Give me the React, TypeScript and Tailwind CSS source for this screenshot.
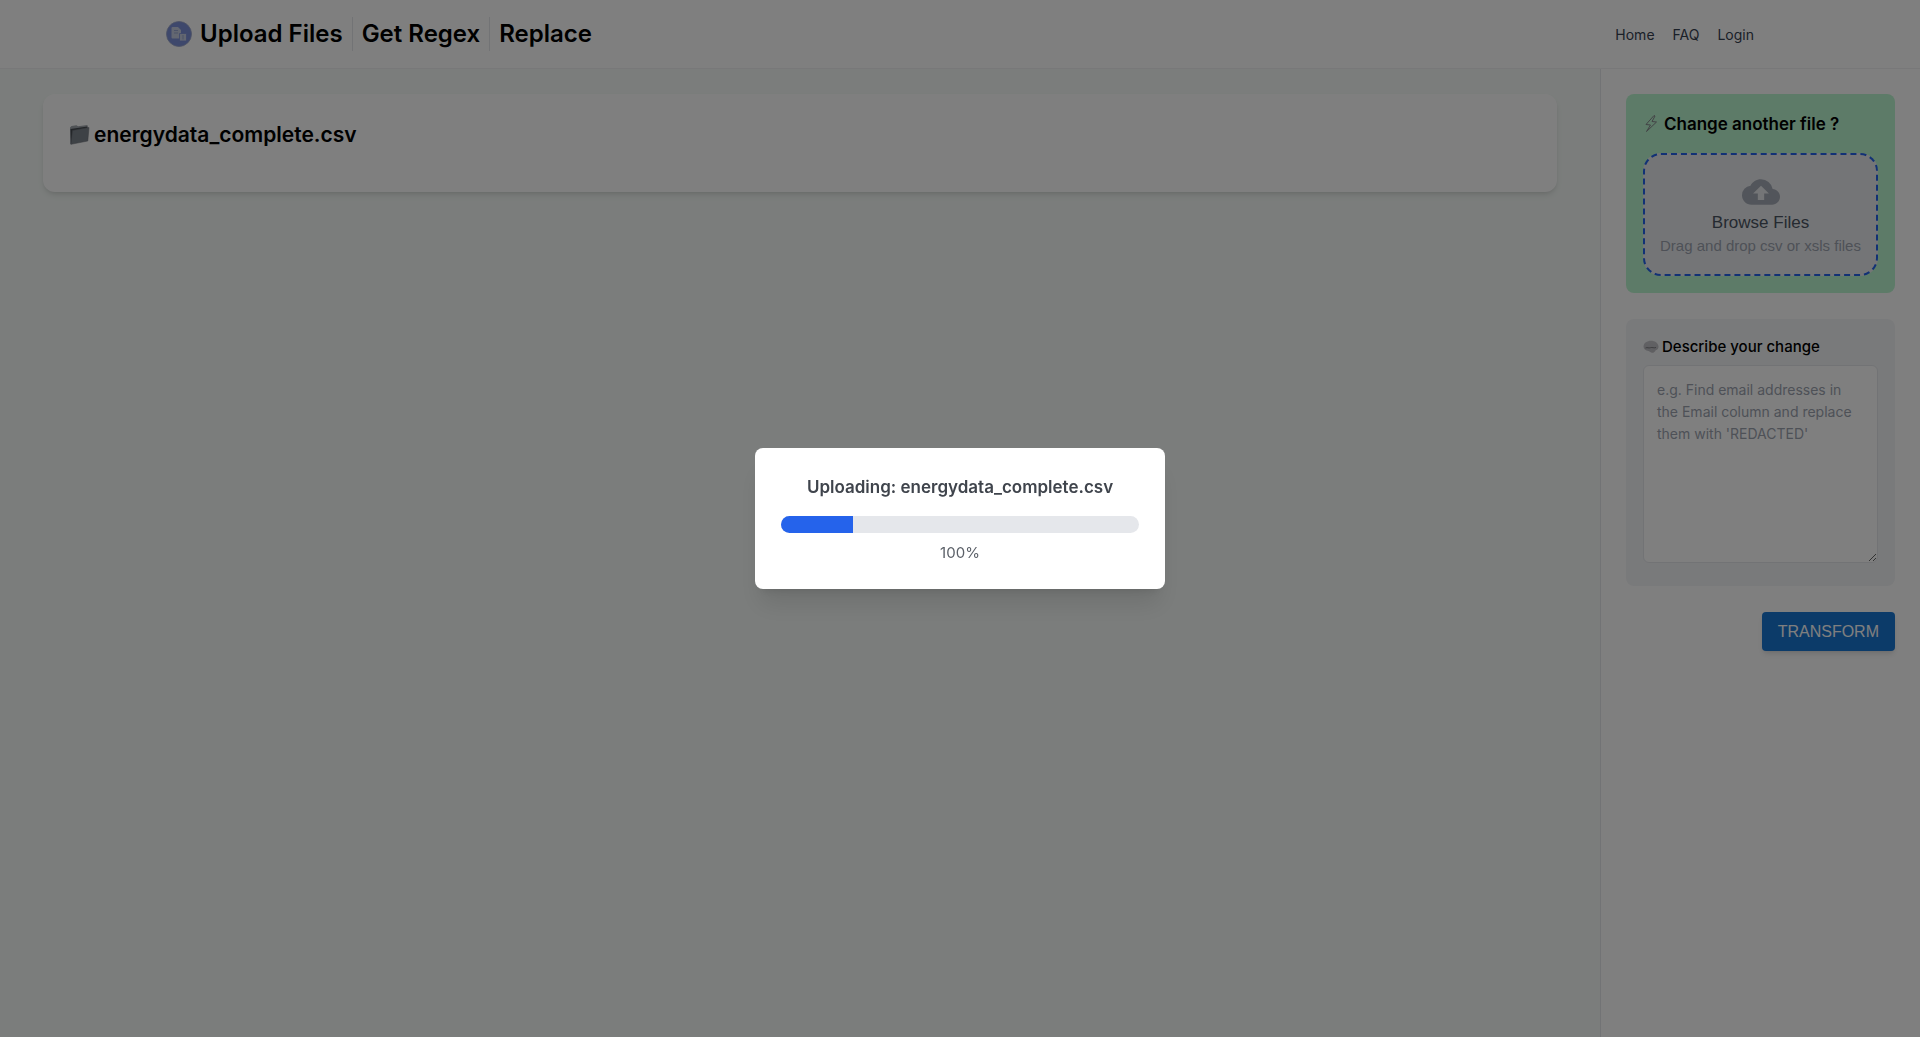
import { MdCloudUpload } from "react-icons/md";

const navigation = [
  { name: "Home", href: "#home" },
  { name: "FAQ", href: "#faq" },
  { name: "Login", href: "#login" },
];

const steps = ["Upload Files", "Get Regex", "Replace"];

const Logo = () => (
  <svg width="26" height="26" viewBox="0 0 26 26" fill="none" aria-hidden="true">
    <defs>
      <linearGradient id="logo" x1="13" y1="0" x2="13" y2="26">
        <stop offset="0.65" stopColor="#7c90d8" />
        <stop offset="0.8" stopColor="#4a78d0" />
        <stop offset="1" stopColor="#4a74b8" />
      </linearGradient>
    </defs>
    <circle cx="13" cy="13" r="12.5" fill="url(#logo)" stroke="#9aa5c8" strokeWidth="0.8" />
    <path d="M6.500 6h5.500l3 3v8.500H6.500a1 1 0 0 1-1-1V7a1 1 0 0 1 1-1z" fill="#c6cee2" />
    <path d="M8 9.500h4M8 12h4" stroke="#98a6d0" />
    <path d="M13.500 12.500h7v7.500h-7z" fill="#c6cee2" stroke="#7c90d8" strokeWidth="0.8" />
    <path d="M17 14v4.500" stroke="#98a6d0" />
  </svg>
);

const FolderIcon = () => (
  <svg width="21" height="22" viewBox="0 0 21 22" fill="none" aria-hidden="true">
    <defs>
      <linearGradient id="folder" x1="3" y1="5" x2="20" y2="19">
        <stop stopColor="#7d848c" />
        <stop offset="0.6" stopColor="#9aa2aa" />
        <stop offset="1" stopColor="#7d848c" />
      </linearGradient>
    </defs>
    <path d="M1 3.500l1.500-1.500 5-.8 1.500 1L18.500 1v3L2 20.500l-1-.5z" fill="#a0a6ad" />
    <path d="M1.500 5L18.500 2.500V5L3 19l-1 .5z" fill="#454a50" />
    <path d="M3.500 6.500L20 3.500 18.800 17 2 20.300z" fill="url(#folder)" stroke="#6a7178" strokeWidth="0.5" />
  </svg>
);

const BoltIcon = () => (
  <svg width="16" height="20" viewBox="0 0 16 20" fill="none" aria-hidden="true">
    <path
      d="M11 1.500L3 10.500l4.500.5L3.500 17.500l10-9.500-4.500-.5 3-5.500z"
      stroke="#85868c"
      strokeLinejoin="round"
    />
  </svg>
);

const BrainIcon = () => (
  <svg width="16" height="14" viewBox="0 0 16 14" fill="none" aria-hidden="true">
    <defs>
      <linearGradient id="brain" x1="8" y1="0" x2="8" y2="14">
        <stop stopColor="#c4c4c9" />
        <stop offset="0.45" stopColor="#98989e" />
        <stop offset="1" stopColor="#3f3f45" />
      </linearGradient>
    </defs>
    <path
      d="M.5 6.500C.8 3 4 .8 8 .8s7 2.200 7.500 5.400c.2 2.300-1 3.500-2.800 4-.6 1.500-2 2.700-3.700 2.600-1.400-.2-2-1.300-3.500-1.700C2.500 10.300.5 9 .5 6.500z"
      fill="url(#brain)"
    />
    <path d="M2.500 8c2-1 3 .5 5-.3s3 .8 5.500-.2" stroke="#5c5c62" strokeWidth="0.7" />
  </svg>
);

const Header = () => (
  <header className="border-b border-[#f0f1f2] bg-white">
    <div className="mx-auto flex h-[68px] max-w-[1638px] items-center justify-between px-[25px]">
      <div className="flex items-center gap-2">
        <Logo />
        <h1 className="flex items-center divide-x divide-gray-200 text-[24px] leading-[34px] font-semibold text-black">
          {steps.map((step) => (
            <span key={step} className="px-[9px] first:pl-0">
              {step}
            </span>
          ))}
        </h1>
      </div>
      <nav className="flex gap-[18px] text-[14px] leading-[21px] text-[#374151]">
        {navigation.map((item) => (
          <a key={item.name} href={item.href}>
            {item.name}
          </a>
        ))}
      </nav>
    </div>
  </header>
);

const Sidebar = () => (
  <aside className="flex w-[320px] shrink-0 flex-col gap-[26px] border-l border-gray-200 bg-white p-[25px]">
    <section className="rounded-lg bg-[#bbf7d0] p-[17px]">
      <h2 className="flex items-center gap-[5px] text-[17px] leading-[26px] font-semibold text-black">
        <BoltIcon />
        Change another file ?
      </h2>
      <label className="mt-4 flex h-[123px] cursor-pointer flex-col items-center justify-center rounded-[18px] border-2 border-dashed border-[#2563eb] bg-[#e9ebee] font-['Liberation_Sans',Arial,sans-serif]">
        <MdCloudUpload className="size-[38px] text-[#a5abb6]" />
        <span className="text-[17px] leading-[24px] text-[#4b5563]">Browse Files</span>
        <span className="text-[15px] leading-[22px] text-[#9ca3af]">Drag and drop csv or xsls files</span>
        <input type="file" className="sr-only" />
      </label>
    </section>
    <section className="rounded-lg bg-[#f3f4f6] px-[17px] pt-[17px] pb-[23px]">
      <label
        htmlFor="change"
        className="flex items-center gap-[3px] text-[15px] leading-[21px] font-medium text-black"
      >
        <BrainIcon />
        Describe your change
      </label>
      <textarea
        id="change"
        className="mt-2 block h-[198px] w-full resize rounded-md border border-gray-200 bg-white p-[13px] text-[14px] leading-[22px] placeholder:text-[#9ca3af]"
        placeholder="e.g. Find email addresses in the Email column and replace them with 'REDACTED'"
      />
    </section>
    <button
      type="button"
      className="h-[39px] self-end rounded bg-[#1976d2] px-4 font-['Liberation_Sans',Arial,sans-serif] text-[16px] leading-[24px] text-white shadow-md"
    >
      TRANSFORM
    </button>
  </aside>
);

const UploadDialog = ({ fileName, fill }: { fileName: string; fill: number }) => (
  <div className="fixed inset-0 z-50 flex items-center justify-center bg-black/50">
    <div
      role="dialog"
      aria-modal="true"
      aria-labelledby="upload-title"
      className="w-[410px] rounded-lg bg-white p-[26px] text-center shadow-xl"
    >
      <h2 id="upload-title" className="text-[17px] leading-[26px] font-semibold text-[#3f444c]">
        Uploading: {fileName}
      </h2>
      <div className="mt-4 h-[17px] overflow-hidden rounded-full bg-[#e5e7eb]">
        <div className="h-full bg-[#2563eb]" style={{ width: `${fill}%` }} />
      </div>
      <p className="mt-[9px] text-[15px] leading-[21px] text-[#5b6068]">100%</p>
    </div>
  </div>
);

const App = () => {
  const fileName = "energydata_complete.csv";

  return (
    <div className="flex min-h-screen flex-col bg-[#f6fbf8] font-['Inter',sans-serif]">
      <Header />
      <div className="flex flex-1">
        <main className="flex-1 px-[43px] pt-[25px]">
          <div className="rounded-xl bg-white px-[26px] pt-[26px] pb-[43px] shadow-md">
            <h2 className="flex items-center gap-1 text-[21px] leading-[29px] font-semibold text-black">
              <FolderIcon />
              {fileName}
            </h2>
          </div>
        </main>
        <Sidebar />
      </div>
      <UploadDialog fileName={fileName} fill={20} />
    </div>
  );
};

export default App;
